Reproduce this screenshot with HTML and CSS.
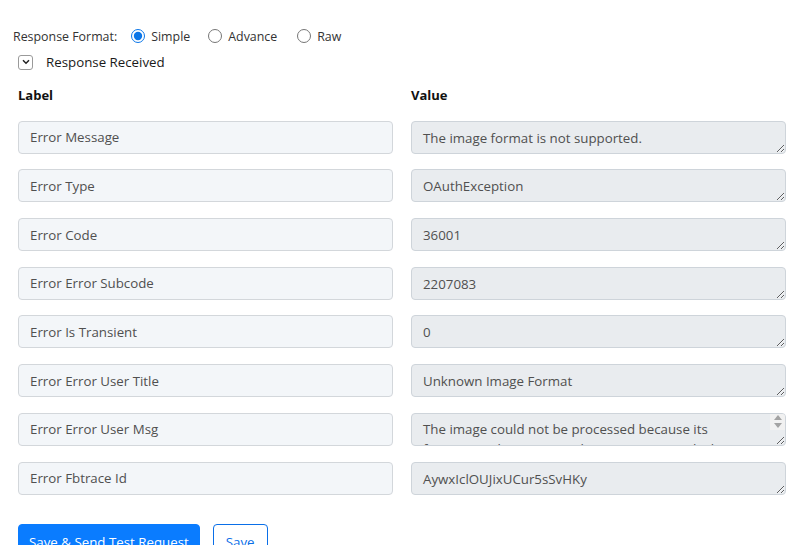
FILE: index.html
```html
<!DOCTYPE html>
<html lang="en">

<head>
    <meta charset="UTF-8">
    <meta name="viewport" content="width=device-width, initial-scale=1.0">
    <title>Response Received</title>
    <link rel="stylesheet" href="styles.css">
</head>

<body>
    <div class="panel">
        <!-- Response format -->
        <div class="format-row">
            <span class="format-label">Response Format:</span>
            <label class="radio"><input type="radio" name="format" checked> Simple</label>
            <label class="radio"><input type="radio" name="format"> Advance</label>
            <label class="radio"><input type="radio" name="format"> Raw</label>
        </div>

        <div class="toggle-row">
            <span class="toggle-box">
                <svg width="8" height="6" viewBox="0 0 8 6"><path d="M1 1.2l3 3 3-3" fill="none" stroke="#222" stroke-width="1.5"/></svg>
            </span>
            <span class="toggle-title">Response Received</span>
        </div>

        <!-- Fields -->
        <div class="fields">
            <div class="col-head">Label</div>
            <div class="col-head">Value</div>

            <input class="field-label" value="Error Message" readonly>
            <textarea class="field-value" readonly>The image format is not supported.</textarea>

            <input class="field-label" value="Error Type" readonly>
            <textarea class="field-value" readonly>OAuthException</textarea>

            <input class="field-label" value="Error Code" readonly>
            <textarea class="field-value" readonly>36001</textarea>

            <input class="field-label" value="Error Error Subcode" readonly>
            <textarea class="field-value" readonly>2207083</textarea>

            <input class="field-label" value="Error Is Transient" readonly>
            <textarea class="field-value" readonly>0</textarea>

            <input class="field-label" value="Error Error User Title" readonly>
            <textarea class="field-value" readonly>Unknown Image Format</textarea>

            <input class="field-label" value="Error Error User Msg" readonly>
            <div class="scroll-wrap">
                <textarea class="field-value scroll" readonly>The image could not be processed because its format is either corrupted or not recognized. The media file you uploaded could not be used.</textarea>
                <span class="fake-scrollbar">
                    <span class="arrow up"></span>
                    <span class="arrow down"></span>
                </span>
            </div>

            <input class="field-label" value="Error Fbtrace Id" readonly>
            <textarea class="field-value" readonly>AywxIclOUJixUCur5sSvHKy</textarea>
        </div>

        <div class="actions">
            <button class="btn-primary">Save &amp; Send Test Request</button>
            <button class="btn-outline">Save</button>
        </div>
    </div>
</body>

</html>
```

FILE: styles.css
```css
* {
    margin: 0;
    padding: 0;
    box-sizing: border-box;
}

body {
    font-family: 'Open Sans', sans-serif;
    background: #ffffff;
    color: #222;
    overflow: hidden;
}

.panel {
    padding: 27px 11px 0 13px;
}

/* Response format */
.format-row {
    display: flex;
    align-items: center;
    font-size: 12.4px;
    color: #333;
    height: 18px;
}

.format-label {
    margin-right: 14px;
}

.radio {
    display: flex;
    align-items: center;
    margin-right: 18px;
}

.radio input {
    width: 14px;
    height: 14px;
    margin: 0 6px 0 0;
    accent-color: #0b76e8;
}

.radio:last-child {
    margin-left: 2px;
}

.toggle-row {
    display: flex;
    align-items: center;
    margin: 9px 0 0 5px;
    height: 16px;
}

.toggle-box {
    width: 15px;
    height: 15px;
    border: 1px solid #9a9a9a;
    border-radius: 3px;
    display: flex;
    align-items: center;
    justify-content: center;
    margin-right: 13px;
}

.toggle-title {
    font-size: 13.3px;
    color: #1a1a1a;
}

/* Fields */
.fields {
    display: grid;
    grid-template-columns: 375px 375px;
    column-gap: 18px;
    row-gap: 15.7px;
    margin: 16px 0 0 5px;
}

.col-head {
    font-size: 13px;
    font-weight: bold;
    color: #111;
    margin-bottom: 1px;
}

.field-label,
.field-value {
    height: 33px;
    width: 100%;
    font-family: 'Open Sans', sans-serif;
    font-size: 13.3px;
    color: #505050;
    border-radius: 4px;
    padding: 6px 11px;
    outline: none;
    display: block;
}

.field-label {
    background: #f3f6f9;
    border: 1px solid #d3d7db;
}

.field-value {
    background: #e9ecef;
    border: 1px solid #ced4da;
    resize: vertical;
    overflow: hidden;
    line-height: 20px;
}

/* Long value with scrollbar */
.scroll-wrap {
    position: relative;
}

.field-value.scroll {
    padding-right: 40px;
    line-height: 19.8px;
}

.fake-scrollbar {
    position: absolute;
    top: 1px;
    right: 1px;
    width: 15px;
    height: 16px;
    background: #f1f1f1;
    border-top-right-radius: 3px;
    display: flex;
    flex-direction: column;
    align-items: center;
    justify-content: center;
    gap: 3px;
}

.arrow {
    width: 0;
    height: 0;
    border-left: 4.5px solid transparent;
    border-right: 4.5px solid transparent;
}

.arrow.up {
    border-bottom: 5px solid #a3a3a3;
}

.arrow.down {
    border-top: 5px solid #a3a3a3;
}

/* Buttons */
.actions {
    display: flex;
    gap: 13px;
    margin: 29px 0 0 5px;
}

.actions button {
    font-family: 'Open Sans', sans-serif;
    font-size: 13.3px;
    border-radius: 4px;
    height: 36px;
    cursor: pointer;
}

.btn-primary {
    background: #0a7cff;
    color: #ffffff;
    border: 1px solid #0a7cff;
    padding: 0 10px;
}

.btn-outline {
    background: #ffffff;
    color: #0a6fe8;
    border: 1px solid #0a6fe8;
    padding: 0 12px;
}
```
